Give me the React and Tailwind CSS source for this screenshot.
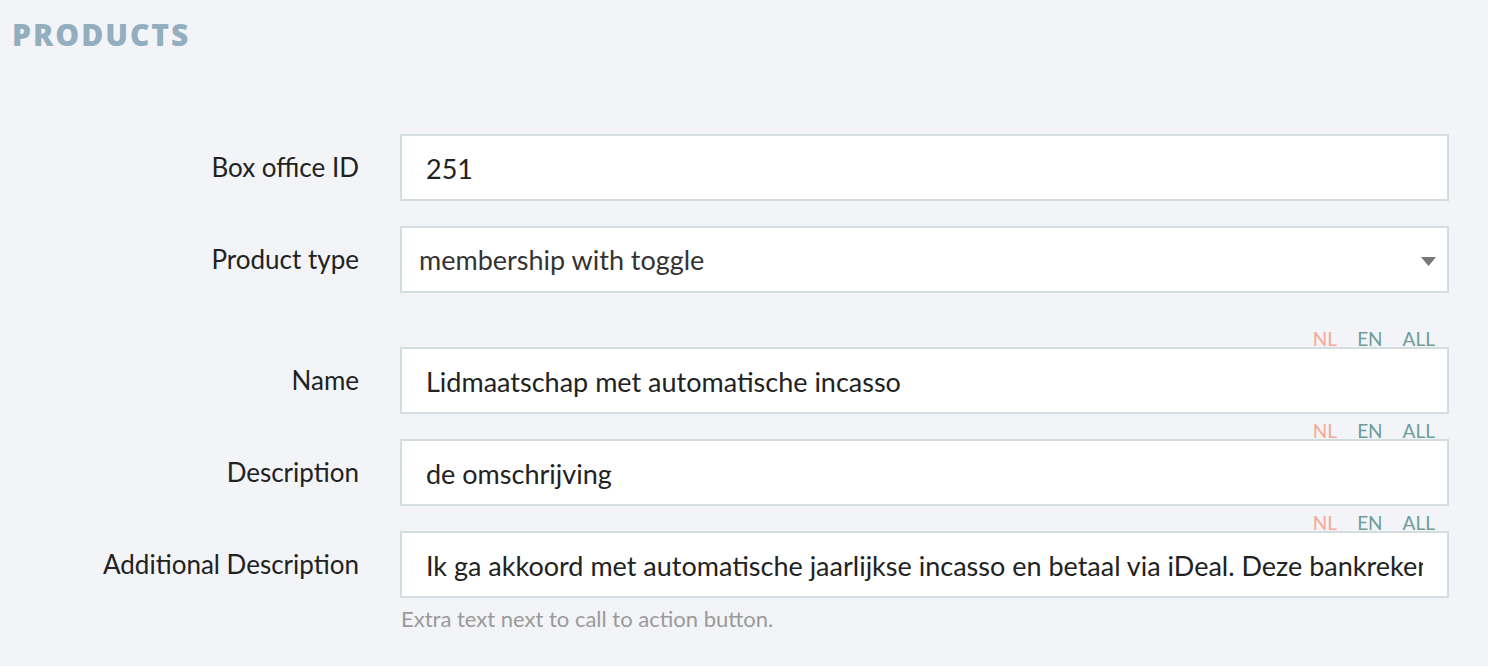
import { useState } from "react";

const body = { fontFamily: '"Source Sans Pro", Lato, "Noto Sans", sans-serif' };

function LangTabs() {
  return (
    <div className="ml-[400px] mt-[8px] flex h-[17px] items-center justify-end gap-[20px] pr-[14px] text-[19px] leading-none">
      <span className="text-[#f4a897]">NL</span>
      <span className="text-[#6f9c9c]">EN</span>
      <span className="text-[#6f9c9c]">ALL</span>
    </div>
  );
}

function Field({ label, children }) {
  return (
    <div className="flex items-center">
      <label className="w-[360px] shrink-0 pr-[1px] text-right text-[26px] text-[#222]">{label}</label>
      <div className="relative ml-[40px] flex-1">{children}</div>
    </div>
  );
}

function TextInput({ value }) {
  return (
    <input
      readOnly
      value={value}
      className="h-[67px] w-full border-2 border-[#d3dddd] bg-white px-[24px] pt-[2px] text-[27px] text-[#222] outline-none"
      style={body}
    />
  );
}

export default function App() {
  const [type, setType] = useState("membership");
  return (
    <div className="min-h-[666px] w-full bg-[#f2f4f7] pr-[39px]" style={body}>
      <h1
        className="pl-[12px] pt-[17px] text-[30px] font-extrabold leading-[36px] tracking-[2px] text-[#93aebf]"
        style={{ fontFamily: '"Open Sans", sans-serif' }}
      >
        PRODUCTS
      </h1>

      <div className="mt-[81px]">
        <Field label="Box office ID">
          <TextInput value="251" />
        </Field>

        <div className="mt-[25px]">
          <Field label="Product type">
            <select
              value={type}
              onChange={(e) => setType(e.target.value)}
              className="h-[67px] w-full appearance-none rounded-none border-2 border-[#d3dddd] bg-white px-[17px] pt-[2px] text-[27px] text-[#333] outline-none"
              style={body}
            >
              <option value="membership">membership with toggle</option>
            </select>
            <svg className="pointer-events-none absolute right-[13px] top-[31px]" width="15" height="9" viewBox="0 0 15 9">
              <path d="M0 0h15L7.5 9z" fill="#777" />
            </svg>
          </Field>
        </div>

        <div className="mt-[37px]">
          <LangTabs />
          <Field label="Name">
            <TextInput value="Lidmaatschap met automatische incasso" />
          </Field>
        </div>

        <LangTabs />
        <Field label="Description">
          <TextInput value="de omschrijving" />
        </Field>

        <LangTabs />
        <Field label="Additional Description">
          <TextInput value="Ik ga akkoord met automatische jaarlijkse incasso en betaal via iDeal. Deze bankrekening wordt gebruikt voor de jaarlijkse incasso." />
        </Field>
        <p className="ml-[401px] mt-[4px] text-[22px] text-[#9a9a9a]">Extra text next to call to action button.</p>
      </div>
    </div>
  );
}
